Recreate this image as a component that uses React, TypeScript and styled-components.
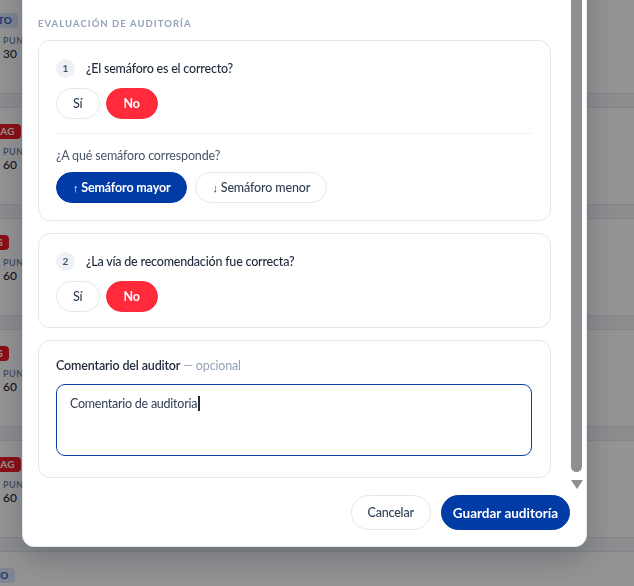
import React from 'react';
import styled, { createGlobalStyle, css } from 'styled-components';

type Tone = 'info' | 'danger';
type Variant = 'outline' | 'danger' | 'primary';

const rows: { tone: Tone; label: string; score: string }[] = [
    { tone: 'info', label: 'ABIERTO', score: '30' },
    { tone: 'danger', label: 'RED FLAG', score: '60' },
    { tone: 'danger', label: 'FLAG', score: '60' },
    { tone: 'danger', label: 'FLAG', score: '60' },
    { tone: 'danger', label: 'RED FLAG', score: '60' },
    { tone: 'info', label: 'NUEVO', score: '30' },
];

export default function App() {
    return (
        <>
            <GlobalStyle />
            <BgPage>
                {rows.map((row, i) => (
                    <BgRow key={i}>
                        <BgCell>
                            <BadgeSlot>
                                <Badge $tone={row.tone}>{row.label}</Badge>
                            </BadgeSlot>
                            <FieldLabel>Puntaje</FieldLabel>
                            <FieldValue>{row.score}</FieldValue>
                        </BgCell>
                        <BgBand />
                    </BgRow>
                ))}
            </BgPage>

            <Overlay>
                <Modal>
                    <Body>
                        <Content>
                            <SectionTitle>Evaluación de auditoría</SectionTitle>
                            <Cards>
                                <Card $padBottom={17}>
                                    <QuestionRow>
                                        <StepNumber>1</StepNumber>
                                        <QuestionText>¿El semáforo es el correcto?</QuestionText>
                                    </QuestionRow>
                                    <ChoiceRow $gap={6}>
                                        <Pill $variant="outline">Sí</Pill>
                                        <Pill $variant="danger">No</Pill>
                                    </ChoiceRow>
                                    <Divider />
                                    <SubQuestion>¿A qué semáforo corresponde?</SubQuestion>
                                    <ChoiceRow $gap={8} $flush>
                                        <Pill $variant="primary">
                                            <Arrow>↑</Arrow> Semáforo mayor
                                        </Pill>
                                        <Pill $variant="outline">
                                            <Arrow>↓</Arrow> Semáforo menor
                                        </Pill>
                                    </ChoiceRow>
                                </Card>

                                <Card $padBottom={15}>
                                    <QuestionRow>
                                        <StepNumber>2</StepNumber>
                                        <QuestionText>¿La vía de recomendación fue correcta?</QuestionText>
                                    </QuestionRow>
                                    <ChoiceRow $gap={6}>
                                        <Pill $variant="outline">Sí</Pill>
                                        <Pill $variant="danger">No</Pill>
                                    </ChoiceRow>
                                </Card>

                                <Card $padBottom={21}>
                                    <CommentLabel>
                                        Comentario del auditor <Optional>— opcional</Optional>
                                    </CommentLabel>
                                    <CommentBox role="textbox">
                                        Comentario de auditoria
                                        <Caret />
                                    </CommentBox>
                                </Card>
                            </Cards>
                        </Content>
                        <ScrollTrack>
                            <ScrollThumb />
                            <ScrollArrow>
                                <ArrowDown />
                            </ScrollArrow>
                        </ScrollTrack>
                    </Body>
                    <Footer>
                        <FooterButton $variant="outline">Cancelar</FooterButton>
                        <FooterButton $variant="primary">Guardar auditoría</FooterButton>
                    </Footer>
                </Modal>
            </Overlay>
        </>
    );
}

const GlobalStyle = createGlobalStyle`
    * {
        box-sizing: border-box;
    }
    html,
    body {
        margin: 0;
        padding: 0;
        height: 100%;
        background: #ffffff;
        overflow: hidden;
    }
    body {
        font-family: Lato, 'Liberation Sans', sans-serif;
        color: #1e293b;
    }
`;

/* page behind the dialog */

const BgPage = styled.div`
    height: 100vh;
    overflow: hidden;
    padding-left: 3px;
    display: flex;
    flex-direction: column;
`;

const BgRow = styled.div`
    flex-shrink: 0;
    height: 111px;
    display: flex;
    flex-direction: column;
    &:first-child {
        margin-top: -3px;
    }
`;

const BgCell = styled.div`
    flex: 1;
    padding-top: 16px;
    display: flex;
    flex-direction: column;
`;

const BgBand = styled.div`
    height: 15px;
    margin-left: -3px;
    background: #f1f3f6;
    border-top: 1px solid #e3e6eb;
    border-bottom: 1px solid #e3e6eb;
`;

const BadgeSlot = styled.div`
    width: 72px;
    margin-left: -49px;
    display: flex;
    justify-content: center;
`;

const Badge = styled.span<{ $tone: Tone }>`
    height: 15px;
    padding: 0 6px;
    border-radius: 4px;
    font-size: 10px;
    font-weight: 700;
    line-height: 15px;
    letter-spacing: 0.3px;
    white-space: nowrap;
    ${({ $tone }) =>
        $tone === 'danger'
            ? css`
                  background: #f01a24;
                  color: #ffffff;
              `
            : css`
                  background: #dce6fa;
                  color: #2d5bc8;
              `}
`;

const FieldLabel = styled.div`
    margin-top: 7px;
    font-size: 9px;
    font-weight: 600;
    line-height: 12px;
    letter-spacing: 0.5px;
    text-transform: uppercase;
    color: #70819c;
    white-space: nowrap;
`;

const FieldValue = styled.div`
    font-size: 12px;
    font-weight: 500;
    line-height: 14px;
    color: #1e293b;
`;

/* dialog */

const Overlay = styled.div`
    position: fixed;
    inset: 0;
    background: rgba(0, 0, 0, 0.42);
    display: flex;
    flex-direction: column;
    justify-content: flex-end;
    align-items: flex-start;
    padding: 0 0 39px 22px;
    overflow: hidden;
`;

const Modal = styled.div`
    flex-shrink: 0;
    width: 565px;
    background: #ffffff;
    border: 1px solid #e2e8f0;
    border-radius: 12px;
    box-shadow: 0 12px 32px rgba(15, 23, 42, 0.25);
    display: flex;
    flex-direction: column;
    overflow: hidden;
`;

const Body = styled.div`
    display: flex;
`;

const Content = styled.div`
    flex: 1;
    padding: 60px 18px 13px 15px;
    display: flex;
    flex-direction: column;
`;

const SectionTitle = styled.div`
    margin-bottom: 9px;
    font-size: 9.5px;
    font-weight: 700;
    line-height: 14px;
    letter-spacing: 1.05px;
    text-transform: uppercase;
    color: #94a3b8;
`;

const Cards = styled.div`
    display: flex;
    flex-direction: column;
    gap: 12px;
`;

const Card = styled.div<{ $padBottom: number }>`
    border: 1px solid #e2e8f0;
    border-radius: 12px;
    padding: 16px 18px ${({ $padBottom }) => $padBottom}px 17px;
    display: flex;
    flex-direction: column;
`;

const QuestionRow = styled.div`
    height: 22px;
    display: flex;
    align-items: center;
    gap: 11px;
`;

const StepNumber = styled.span`
    width: 19px;
    height: 19px;
    border-radius: 50%;
    background: #eef2f7;
    color: #475569;
    font-size: 10px;
    font-weight: 700;
    display: flex;
    align-items: center;
    justify-content: center;
`;

const QuestionText = styled.span`
    font-size: 12.5px;
    font-weight: 500;
    letter-spacing: -0.2px;
    color: #1e293b;
`;

const ChoiceRow = styled.div<{ $gap: number; $flush?: boolean }>`
    display: flex;
    gap: ${({ $gap }) => $gap}px;
    margin-top: ${({ $flush }) => ($flush ? 0 : 9)}px;
`;

const variantStyles = (variant: Variant) => {
    switch (variant) {
        case 'danger':
            return css`
                background: #ff2b3a;
                border-color: #ff2b3a;
                color: #ffffff;
                font-weight: 700;
                padding: 0 17px;
            `;
        case 'primary':
            return css`
                background: #003ba6;
                border-color: #003ba6;
                color: #ffffff;
                font-weight: 700;
            `;
        default:
            return css`
                background: #ffffff;
                border-color: #e2e8f0;
                color: #334155;
                font-weight: 500;
            `;
    }
};

const Pill = styled.button<{ $variant: Variant }>`
    height: 31px;
    padding: 0 16px;
    border-radius: 999px;
    border: 1px solid;
    font-family: inherit;
    font-size: 12.5px;
    letter-spacing: -0.15px;
    white-space: nowrap;
    cursor: pointer;
    ${({ $variant }) => variantStyles($variant)};
`;

const Arrow = styled.span`
    font-family: 'Liberation Sans', sans-serif;
    font-size: 11px;
    font-weight: 400;
`;

const Divider = styled.div`
    height: 1px;
    margin: 14px 0;
    background: #eef1f5;
`;

const SubQuestion = styled.div`
    margin-bottom: 8px;
    font-size: 12.5px;
    line-height: 16px;
    letter-spacing: -0.15px;
    color: #475569;
`;

const CommentLabel = styled.div`
    font-size: 12.5px;
    font-weight: 600;
    line-height: 18px;
    letter-spacing: -0.15px;
    color: #1e293b;
`;

const Optional = styled.span`
    font-weight: 400;
    color: #94a3b8;
`;

const CommentBox = styled.div`
    margin-top: 9px;
    height: 72px;
    padding: 10px 13px;
    border: 1px solid #0b3da8;
    border-radius: 9px;
    font-size: 12.5px;
    line-height: 18px;
    letter-spacing: -0.25px;
    color: #334155;
`;

const Caret = styled.span`
    display: inline-block;
    width: 2px;
    height: 15px;
    margin-left: 1px;
    vertical-align: -3px;
    background: #1e293b;
`;

const ScrollTrack = styled.div`
    width: 16px;
    margin-right: 1px;
    padding: 0 3px 0 2px;
    display: flex;
    flex-direction: column;
`;

const ScrollThumb = styled.div`
    flex: 1;
    border-radius: 6px;
    background: #8f8f8f;
`;

const ScrollArrow = styled.div`
    height: 19px;
    padding-top: 8px;
    display: flex;
    justify-content: center;
`;

const ArrowDown = styled.span`
    width: 0;
    height: 0;
    border-left: 6px solid transparent;
    border-right: 6px solid transparent;
    border-top: 9px solid #8f8f8f;
`;

const Footer = styled.div`
    display: flex;
    justify-content: flex-end;
    gap: 10px;
    padding: 4px 16px 16px;
`;

const FooterButton = styled.button<{ $variant: Variant }>`
    height: 35px;
    border-radius: 999px;
    border: 1px solid;
    font-family: inherit;
    white-space: nowrap;
    cursor: pointer;
    ${({ $variant }) => variantStyles($variant)};
    ${({ $variant }) =>
        $variant === 'primary'
            ? css`
                  padding: 0 11px;
                  font-size: 13.5px;
              `
            : css`
                  padding: 0 16px;
                  font-size: 12.5px;
                  letter-spacing: -0.2px;
              `}
`;
